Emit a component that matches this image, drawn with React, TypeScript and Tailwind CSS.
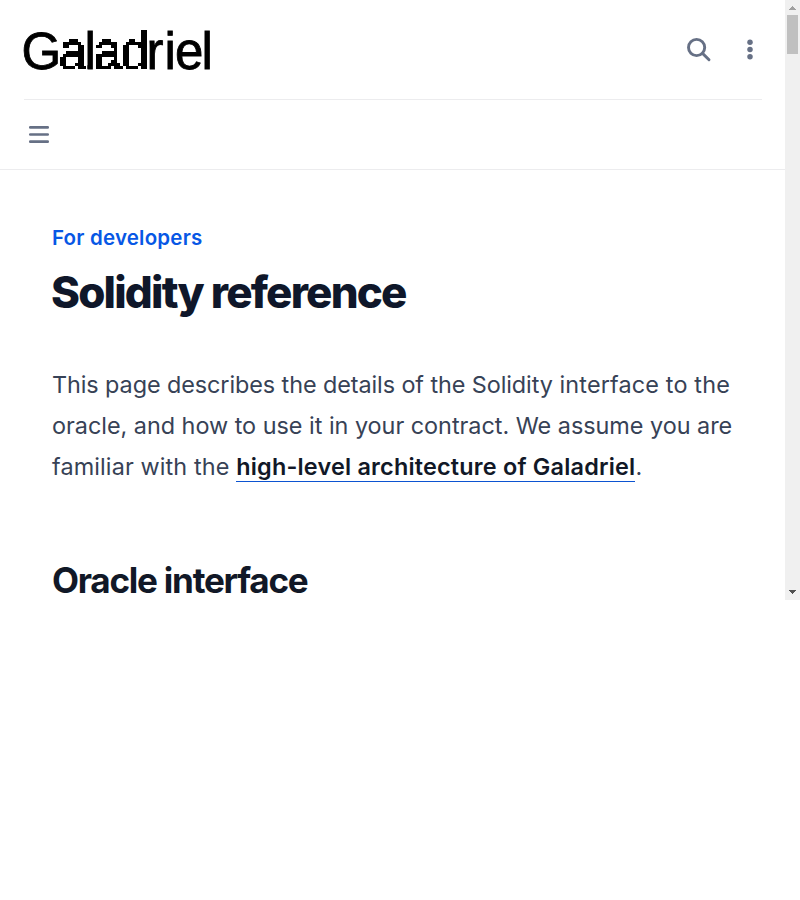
import React from "react";

function Logo() {
  return (
    <svg width="192" height="60" viewBox="22 20 192 60" aria-label="Galadriel" className="-ml-0.5 block overflow-visible">
      <defs>
        <filter id="pixel" filterUnits="userSpaceOnUse" x="20" y="20" width="196" height="60" colorInterpolationFilters="sRGB">
          <feFlood x="58" y="28" width="1" height="1" floodColor="#000" result="dot" />
          <feOffset in="dot" x="57" y="27" width="3" height="3" dx="0" dy="0" />
          <feTile result="grid" />
          <feComposite in="SourceGraphic" in2="grid" operator="in" />
          <feMorphology operator="dilate" radius="1" result="cells" />
          <feComponentTransfer in="cells" x="60" y="20" width="26" height="60" result="blocksA">
            <feFuncA type="discrete" tableValues="0 1" />
          </feComponentTransfer>
          <feComponentTransfer in="cells" x="95" y="20" width="53" height="60" result="blocksB">
            <feFuncA type="discrete" tableValues="0 1" />
          </feComponentTransfer>
          <feOffset in="SourceGraphic" dx="0" dy="0" x="20" y="20" width="40" height="60" result="start" />
          <feOffset in="SourceGraphic" dx="0" dy="0" x="87" y="20" width="7" height="60" result="middle" />
          <feOffset in="SourceGraphic" dx="0" dy="0" x="149" y="20" width="67" height="60" result="end" />
          <feMerge>
            <feMergeNode in="start" />
            <feMergeNode in="blocksA" />
            <feMergeNode in="middle" />
            <feMergeNode in="blocksB" />
            <feMergeNode in="end" />
          </feMerge>
        </filter>
      </defs>
      <text
        filter="url(#pixel)"
        x="21.5 58.7 84.6 93.5 120.5 146.6 164.6 175 201.5"
        y="68.5"
        fontFamily="Liberation Sans, Arial, sans-serif"
        fontSize="51"
        fill="#000"
        stroke="#000"
        strokeWidth="0.8"
      >
        Galadriel
      </text>
    </svg>
  );
}

function Header() {
  return (
    <header className="h-[170px] border-b border-[#ececee]">
      <div className="ml-6 mr-[23px] flex h-[100px] items-center justify-between border-b border-[#ececee]">
        <Logo />
        <div className="flex items-center">
          <svg width="24" height="23" viewBox="0 0 24 23" fill="none" stroke="#667085" strokeWidth="2.9" className="mr-[30px] overflow-visible">
            <circle cx="9.6" cy="9.5" r="8.1" />
            <path d="M15.5 15.4 L22 21.8" strokeLinecap="round" />
          </svg>
          <svg width="18" height="23" viewBox="0 0 18 23" fill="#667085" className="mr-[3px]">
            <circle cx="9" cy="4.3" r="2.75" />
            <circle cx="9" cy="11.5" r="2.75" />
            <circle cx="9" cy="18.7" r="2.75" />
          </svg>
        </div>
      </div>
      <div className="flex h-[69px] items-center pl-[29px]">
        <svg width="20" height="17" viewBox="0 0 20 17" stroke="#667085" strokeWidth="2.7" strokeLinecap="round" className="overflow-visible">
          <path d="M1.3 1.4H18.7M1.3 8.5H18.7M1.3 15.7H18.7" />
        </svg>
      </div>
    </header>
  );
}

function Scrollbar() {
  return (
    <div className="flex h-[600px] w-[15px] shrink-0 flex-col items-center justify-between bg-[#f0f0f0]">
      <div className="flex w-full flex-col items-center">
        <svg width="15" height="15" viewBox="0 0 15 15" fill="#a0a0a0" shapeRendering="crispEdges">
          <path d="M4 10V9H5V8H6V7H7V6H8V7H9V8H10V9H11V10Z" />
        </svg>
        <div className="h-[39px] w-[11px] bg-[#c0c0c0]" />
      </div>
      <svg width="15" height="15" viewBox="0 0 15 15" fill="#505050" shapeRendering="crispEdges">
        <path d="M4 5V6H5V7H6V8H7V9H8V8H9V7H10V6H11V5Z" />
      </svg>
    </div>
  );
}

export default function App() {
  return (
    <div className="h-[900px] w-[800px] overflow-hidden bg-white font-['Inter',sans-serif]">
      <div className="flex h-[600px] overflow-hidden">
        <div className="w-[785px] shrink-0">
          <Header />
          <main className="pl-[52px] pt-[53px]">
            <div className="text-[20.5px] font-semibold leading-[29px] tracking-[0.2px] text-[#0757e5]">For developers</div>
            <h1 className="-ml-px mt-[14px] text-[43.9px] font-extrabold leading-[53px] tracking-[-1.8px] text-[#0f172a]">Solidity reference</h1>
            <p className="mt-[45px] whitespace-nowrap text-[23.4px] leading-[41px] text-[#374256]">
              <span className="tracking-[-0.08px]">This page describes the details of the Solidity</span>
              <span className="tracking-[0.16px]"> interface to the</span>
              <br />
              <span className="tracking-[-0.015px]">oracle, and how to use it in your contract. We assume you are</span>
              <br />
              <span className="tracking-[0.12px]">familiar with the </span>
              <a className="border-b border-[#0c54d1] font-semibold tracking-[0.21px] text-[#111827]">high-level architecture of Galadriel</a>.
            </p>
            <h2 className="mt-[70px] text-[35.1px] font-bold leading-[47px] tracking-[-1.25px] text-[#111827]">Oracle interface</h2>
          </main>
        </div>
        <Scrollbar />
      </div>
    </div>
  );
}
